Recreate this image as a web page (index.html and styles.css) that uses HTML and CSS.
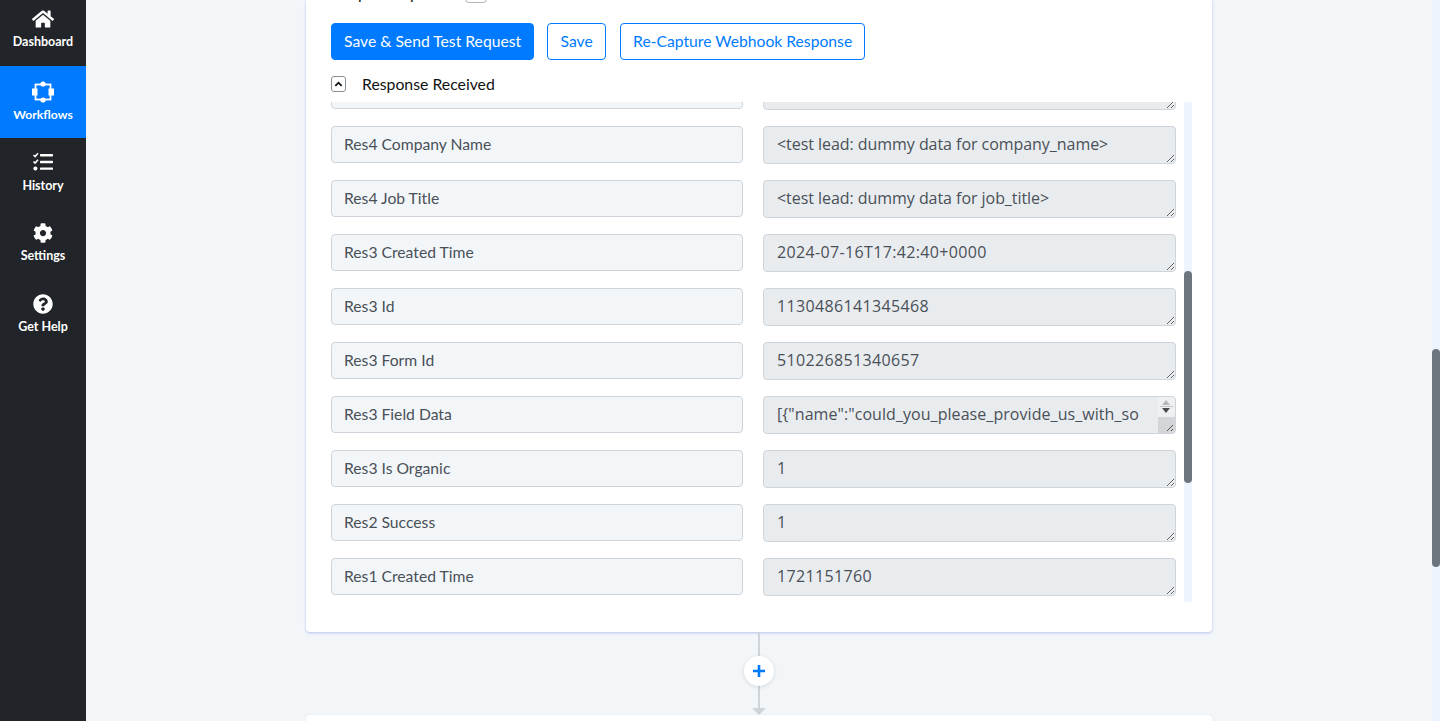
FILE: index.html
```html
<!DOCTYPE html>
<html lang="en">
<head>
  <meta charset="UTF-8">
  <meta name="viewport" content="width=device-width, initial-scale=1.0">
  <title>Workflows</title>
  <link rel="stylesheet" href="styles.css">
</head>
<body>

<nav class="sidebar">
  <a class="nav-item nav-first">
    <svg class="nav-icon" viewBox="0 0 576 512"><path d="M280.37 148.26L96 300.11V464a16 16 0 0 0 16 16l112.06-.29a16 16 0 0 0 15.92-16V368a16 16 0 0 1 16-16h64a16 16 0 0 1 16 16v95.64a16 16 0 0 0 16 16.05L464 480a16 16 0 0 0 16-16V300L295.67 148.26a12.19 12.19 0 0 0-15.3 0zM571.6 251.47L488 182.56V44.05a12 12 0 0 0-12-12h-56a12 12 0 0 0-12 12v72.61L318.47 43a48 48 0 0 0-61 0L4.34 251.47a12 12 0 0 0-1.6 16.9l25.5 31A12 12 0 0 0 45.15 301l235.22-193.74a12.19 12.19 0 0 1 15.3 0L530.9 301a12 12 0 0 0 16.9-1.6l25.5-31a12 12 0 0 0-1.7-16.93z"/></svg>
    <span>Dashboard</span>
  </a>
  <a class="nav-item active">
    <svg class="nav-icon icon-flow" viewBox="0 0 22 22">
      <rect x="3.5" y="3.5" width="15" height="15" fill="none" stroke="#fff" stroke-width="1.8"/>
      <circle cx="11" cy="3" r="2.6"/>
      <circle cx="11" cy="19" r="2.6"/>
      <rect x="0" y="7.5" width="5.5" height="7"/>
      <rect x="16.5" y="7.5" width="5.5" height="7"/>
    </svg>
    <span>Workflows</span>
  </a>
  <a class="nav-item nav-history">
    <svg class="nav-icon" viewBox="0 0 20 20">
      <path d="M0.5 3l1.6 1.6L5 1.2" fill="none" stroke="#fff" stroke-width="1.5"/>
      <path d="M0.5 9.5l1.6 1.6L5 7.7" fill="none" stroke="#fff" stroke-width="1.5"/>
      <circle cx="2.4" cy="16.6" r="2"/>
      <rect x="7" y="2" width="13" height="2.4" rx="0.6"/>
      <rect x="7" y="8.8" width="13" height="2.4" rx="0.6"/>
      <rect x="7" y="15.4" width="13" height="2.4" rx="0.6"/>
    </svg>
    <span>History</span>
  </a>
  <a class="nav-item">
    <svg class="nav-icon" viewBox="0 0 512 512"><path d="M487.4 315.7l-42.6-24.6c4.3-23.2 4.3-47 0-70.2l42.6-24.6c4.9-2.8 7.1-8.6 5.5-14-11.1-35.6-30-67.8-54.7-94.6-3.8-4.1-10-5.1-14.8-2.3L380.8 110c-17.9-15.4-38.5-27.3-60.8-35.1V25.8c0-5.6-3.9-10.5-9.4-11.7-36.7-8.2-74.3-7.8-109.2 0-5.5 1.2-9.4 6.1-9.4 11.7V75c-22.2 7.9-42.8 19.8-60.8 35.1L88.7 85.5c-4.9-2.8-11-1.9-14.8 2.3-24.7 26.7-43.6 58.9-54.7 94.6-1.7 5.4.6 11.2 5.5 14L67.3 221c-4.3 23.2-4.3 47 0 70.2l-42.6 24.6c-4.9 2.8-7.1 8.6-5.5 14 11.1 35.6 30 67.8 54.7 94.6 3.8 4.1 10 5.1 14.8 2.3l42.6-24.6c17.9 15.4 38.5 27.3 60.8 35.1v49.2c0 5.6 3.9 10.5 9.4 11.7 36.7 8.2 74.3 7.8 109.2 0 5.5-1.2 9.4-6.1 9.4-11.7v-49.2c22.2-7.9 42.8-19.8 60.8-35.1l42.6 24.6c4.9 2.8 11 1.9 14.8-2.3 24.7-26.7 43.6-58.9 54.7-94.6 1.5-5.5-.7-11.3-5.6-14.1zM256 336c-44.1 0-80-35.9-80-80s35.9-80 80-80 80 35.9 80 80-35.9 80-80 80z"/></svg>
    <span>Settings</span>
  </a>
  <a class="nav-item">
    <svg class="nav-icon" viewBox="0 0 512 512"><path d="M504 256c0 136.997-111.043 248-248 248S8 392.997 8 256C8 119.083 119.043 8 256 8s248 111.083 248 248zM262.655 90c-54.497 0-89.255 22.957-116.549 63.758-3.536 5.286-2.353 12.415 2.715 16.258l34.699 26.31c5.205 3.947 12.621 3.008 16.665-2.122 17.864-22.658 30.113-35.797 57.303-35.797 20.429 0 45.698 13.148 45.698 32.958 0 14.976-12.363 22.667-32.534 33.976C247.128 238.528 216 254.941 216 296v4c0 6.627 5.373 12 12 12h56c6.627 0 12-5.373 12-12v-1.333c0-28.462 83.186-29.647 83.186-106.667 0-58.002-60.165-102-116.531-102zM256 338c-25.365 0-46 20.635-46 46 0 25.364 20.635 46 46 46s46-20.636 46-46c0-25.365-20.635-46-46-46z"/></svg>
    <span>Get Help</span>
  </a>
</nav>

<main class="main">
  <section class="card">
    <div class="clipped-top">
      <span class="clipped-label">Output Response</span>
      <span class="clipped-box"></span>
    </div>

    <div class="btn-row">
      <button class="btn btn-primary">Save &amp; Send Test Request</button>
      <button class="btn btn-outline btn-save">Save</button>
      <button class="btn btn-outline btn-recapture">Re-Capture Webhook Response</button>
    </div>

    <div class="response-head">
      <span class="collapse-box">
        <svg viewBox="0 0 10 10"><path d="M1.5 7L5 3.5L8.5 7" fill="none" stroke="#111" stroke-width="2"/></svg>
      </span>
      <span>Response Received</span>
    </div>

    <div class="response-list">
      <div class="row row-clipped">
        <input class="field-name" readonly value="Res4 Email">
        <textarea class="field-value" readonly></textarea>
      </div>
      <div class="row">
        <input class="field-name" readonly value="Res4 Company Name">
        <textarea class="field-value" readonly>&lt;test lead: dummy data for company_name&gt;</textarea>
      </div>
      <div class="row">
        <input class="field-name" readonly value="Res4 Job Title">
        <textarea class="field-value" readonly>&lt;test lead: dummy data for job_title&gt;</textarea>
      </div>
      <div class="row">
        <input class="field-name" readonly value="Res3 Created Time">
        <textarea class="field-value field-num" readonly>2024-07-16T17:42:40+0000</textarea>
      </div>
      <div class="row">
        <input class="field-name" readonly value="Res3 Id">
        <textarea class="field-value field-num" readonly>1130486141345468</textarea>
      </div>
      <div class="row">
        <input class="field-name" readonly value="Res3 Form Id">
        <textarea class="field-value field-num" readonly>510226851340657</textarea>
      </div>
      <div class="row">
        <input class="field-name" readonly value="Res3 Field Data">
        <div class="value-wrap">
          <textarea class="field-value field-long" readonly>[{"name":"could_you_please_provide_us_with_some_information_about_your_services":["yes"]},{"name":"full_name","values":["test lead"]}]</textarea>
          <span class="mini-scroll">
            <i class="arrow-up"></i>
            <i class="arrow-line"></i>
            <i class="arrow-down"></i>
            <i class="mini-thumb">
              <svg viewBox="0 0 16 16"><path d="M14 8L8 14M14 12L12 14" stroke="#555" stroke-width="1" fill="none"/></svg>
            </i>
          </span>
        </div>
      </div>
      <div class="row">
        <input class="field-name" readonly value="Res3 Is Organic">
        <textarea class="field-value" readonly>1</textarea>
      </div>
      <div class="row">
        <input class="field-name" readonly value="Res2 Success">
        <textarea class="field-value" readonly>1</textarea>
      </div>
      <div class="row">
        <input class="field-name" readonly value="Res1 Created Time">
        <textarea class="field-value field-num" readonly>1721151760</textarea>
      </div>
      <div class="list-scroll"><div class="list-thumb"></div></div>
    </div>
  </section>

  <div class="connector">
    <span class="plus-btn">
      <svg viewBox="0 0 14 14"><path d="M7 1v12M1 7h12" stroke="#007bff" stroke-width="2.6" fill="none"/></svg>
    </span>
    <span class="connector-arrow"></span>
  </div>

  <section class="card card-next"></section>

  <div class="page-scroll"><div class="page-thumb"></div></div>
</main>

</body>
</html>
```

FILE: styles.css
```css
* {
  box-sizing: border-box;
}

html, body {
  height: 721px;
  margin: 0;
  overflow: hidden;
}

body {
  display: flex;
  font-family: 'Lato', 'Liberation Sans', sans-serif;
  background-color: #f3f6f9;
  color: #495057;
}

/* sidebar */
.sidebar {
  width: 86px;
  flex-shrink: 0;
  background-color: #212529;
  color: #fff;
}

.nav-item {
  display: flex;
  flex-direction: column;
  align-items: center;
  height: 71px;
  padding-top: 14px;
  font-size: 12.5px;
  font-weight: 700;
  line-height: 16px;
}

.nav-first {
  height: 66px;
  padding-top: 9px;
}

.nav-item.active {
  height: 72px;
  padding-top: 15px;
  font-size: 12.2px;
  background-color: #007bff;
}

.nav-icon {
  width: 22px;
  height: 20px;
  margin-bottom: 5px;
  fill: #fff;
}

.icon-flow {
  height: 22px;
  margin-bottom: 4px;
}

.nav-history .nav-icon {
  margin-bottom: 6px;
}

/* main column */
.main {
  position: relative;
  flex: 1;
  display: flex;
  flex-direction: column;
  align-items: center;
  padding-right: 8px;
}

.card {
  width: 906px;
  height: 632px;
  flex-shrink: 0;
  padding: 0 20px 30px 25px;
  background-color: #fff;
  border-radius: 0 0 4px 4px;
  box-shadow: 0 1px 3px rgba(60, 100, 220, 0.35);
}

.card-next {
  height: 30px;
  border-radius: 4px 4px 0 0;
  box-shadow: 0 0 2px rgba(60, 100, 220, 0.12);
}

.clipped-top {
  display: flex;
  align-items: flex-end;
  height: 3px;
  overflow: hidden;
  font-size: 15.8px;
  line-height: 16px;
}

.clipped-label {
  flex-shrink: 0;
  width: 134px;
  margin-bottom: 2px;
  color: #111;
}

.clipped-box {
  flex-shrink: 0;
  width: 22px;
  height: 16px;
  border: 1px solid #adb5bd;
  border-radius: 4px;
}

.btn-row {
  display: flex;
  gap: 13px;
  margin-top: 20px;
}

.btn {
  height: 37px;
  padding: 0 12px 2px;
  font-family: inherit;
  font-size: 15.7px;
  border: 1px solid #007bff;
  border-radius: 4px;
  cursor: pointer;
}

.btn-primary {
  background-color: #007bff;
  color: #fff;
}

.btn-outline {
  background-color: #fff;
  color: #007bff;
}

.btn-save {
  width: 59px;
  padding-left: 0;
  padding-right: 0;
}

.btn-recapture {
  width: 245px;
  margin-left: 1px;
  padding-left: 0;
  padding-right: 0;
}

.response-head {
  display: flex;
  align-items: center;
  gap: 16px;
  height: 18px;
  margin-top: 15px;
  margin-bottom: 9px;
  font-size: 15.8px;
  color: #111;
}

.response-head span:last-child {
  margin-bottom: 2px;
}

.collapse-box {
  display: flex;
  width: 15px;
  height: 16px;
  padding: 2px;
  border: 1px solid #868e96;
  border-radius: 3px;
}

.response-list {
  position: relative;
  width: 861px;
  height: 500px;
  overflow: hidden;
}

.row {
  display: flex;
  align-items: flex-start;
  gap: 20px;
  width: 845px;
  margin-bottom: 16px;
}

.row-clipped {
  height: 8px;
  align-items: flex-end;
  overflow: hidden;
}

.row-clipped .field-name {
  flex-shrink: 0;
  margin-bottom: 1px;
}

.row-clipped .field-value {
  flex-shrink: 0;
}

.field-name {
  width: 412px;
  height: 37px;
  padding: 0 12px 2px;
  font-family: inherit;
  font-size: 15.7px;
  color: #495057;
  background-color: #f3f6f9;
  border: 1px solid #ced4da;
  border-radius: 4px;
  outline: none;
}

.field-value {
  display: block;
  width: 413px;
  height: 38px;
  padding: 5px 13px 7px;
  font-family: 'Open Sans', 'Noto Sans', sans-serif;
  font-size: 16px;
  letter-spacing: -0.05px;
  line-height: 24px;
  color: #495057;
  background-color: #e9ecef;
  border: 1px solid #ced4da;
  border-radius: 4px;
  outline: none;
  overflow: hidden;
}

.field-num {
  letter-spacing: 0.35px;
}

.field-long {
  padding-right: 31px;
  line-height: 25px;
  letter-spacing: 0.06px;
  word-break: break-all;
}

.value-wrap {
  position: relative;
  width: 413px;
}

/* the little native-looking scrollbar in the field data box */
.mini-scroll {
  position: absolute;
  top: 1px;
  right: 1px;
  bottom: 1px;
  width: 17px;
  background-color: #eef0f2;
  border-radius: 0 3px 3px 0;
  overflow: hidden;
}

.arrow-up, .arrow-down {
  position: absolute;
  left: 4px;
  width: 0;
  height: 0;
  border-left: 4.5px solid transparent;
  border-right: 4.5px solid transparent;
}

.arrow-up {
  top: 3px;
  border-bottom: 5px solid #b4b6b8;
}

.arrow-line {
  position: absolute;
  top: 9px;
  left: 2px;
  width: 13px;
  height: 1px;
  background-color: #c4c6c8;
}

.arrow-down {
  top: 11px;
  border-top: 5px solid #4a4a4a;
}

.mini-thumb {
  position: absolute;
  top: 20px;
  left: 0;
  right: 0;
  bottom: 0;
  background-color: #d3d5d8;
}

.mini-thumb svg {
  position: absolute;
  right: 0;
  bottom: 0;
  width: 16px;
  height: 16px;
}

.list-scroll {
  position: absolute;
  top: 0;
  right: 0;
  bottom: 0;
  width: 8px;
  background-color: #edf4fd;
}

.list-thumb {
  position: absolute;
  top: 169px;
  left: 0;
  width: 8px;
  height: 212px;
  background-color: #6c757d;
  border-radius: 4px;
}

/* connector between the steps */
.connector {
  position: relative;
  width: 30px;
  height: 83px;
  flex-shrink: 0;
}

.connector::before {
  content: "";
  position: absolute;
  top: 0;
  left: 14px;
  width: 2px;
  height: 76px;
  background-color: #ced4da;
}

.plus-btn {
  position: absolute;
  top: 24px;
  left: 0;
  display: flex;
  align-items: center;
  justify-content: center;
  width: 30px;
  height: 30px;
  background-color: #fff;
  border-radius: 50%;
  box-shadow: 0 1px 4px rgba(0, 0, 0, 0.12);
}

.plus-btn svg {
  width: 14px;
  height: 14px;
}

.connector-arrow {
  position: absolute;
  top: 76px;
  left: 8px;
  width: 0;
  height: 0;
  border-left: 7px solid transparent;
  border-right: 7px solid transparent;
  border-top: 7px solid #ced4da;
}

.page-scroll {
  position: absolute;
  top: 0;
  right: 0;
  width: 8px;
  height: 721px;
  background-color: #edf4fd;
}

.page-thumb {
  position: absolute;
  top: 349px;
  left: 0;
  width: 8px;
  height: 218px;
  background-color: #6c757d;
  border-radius: 4px;
}
```
